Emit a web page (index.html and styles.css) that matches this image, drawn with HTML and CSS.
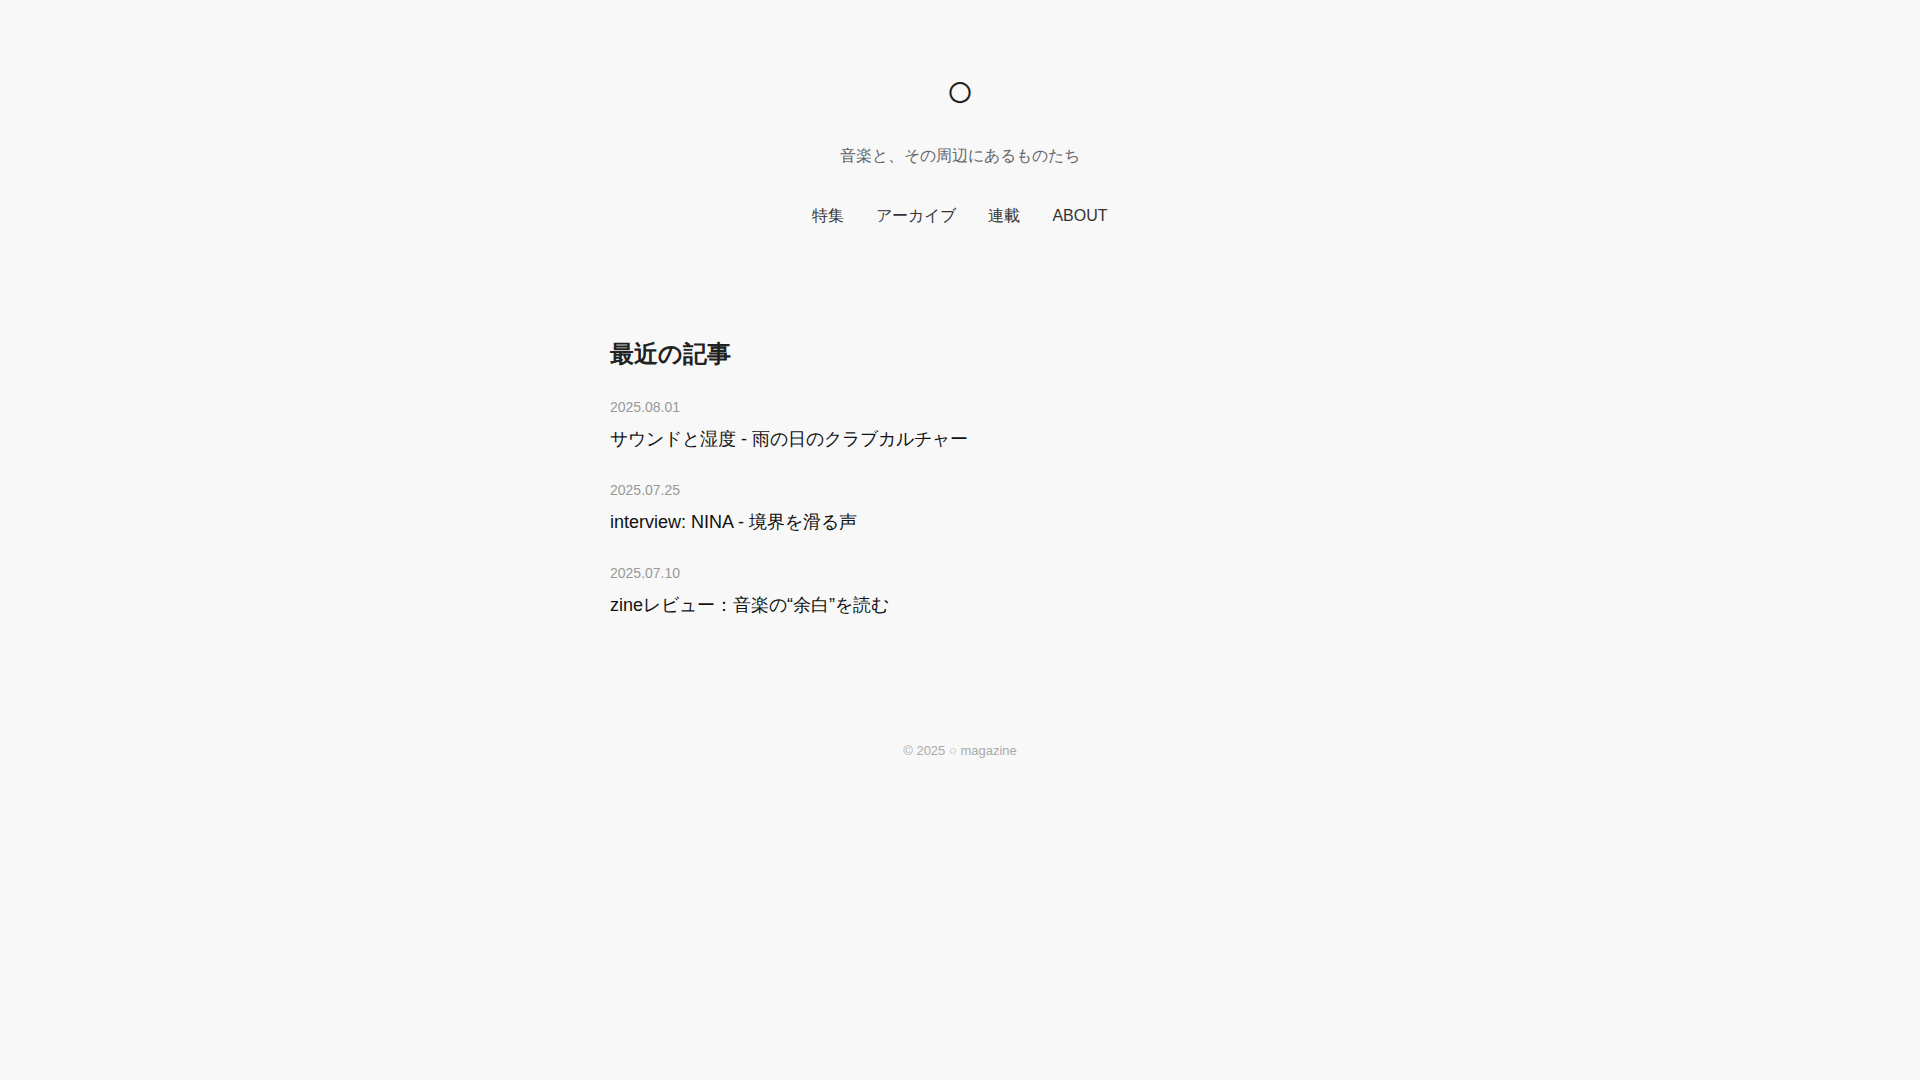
FILE: index.html
```html
<!DOCTYPE html>
<html lang="ja">
  <head>
    <meta charset="UTF-8" />
    <meta name="viewport" content="width=device-width, initial-scale=1.0" />
    <title>○ magazine</title>
    <link rel="stylesheet" href="styles.css">
  </head>
  <body>
    <header class="site-header">
      <h1 class="logo">○</h1>
      <p class="tagline">音楽と、その周辺にあるものたち</p>
      <nav class="site-nav">
        <a href="#">特集</a>
        <a href="#">アーカイブ</a>
        <a href="#">連載</a>
        <a href="#">ABOUT</a>
      </nav>
    </header>

    <main class="container">
      <h2 class="section-title">最近の記事</h2>

      <article class="post">
        <p class="post-date">2025.08.01</p>
        <h3 class="post-title"><a href="#">サウンドと湿度 - 雨の日のクラブカルチャー</a></h3>
      </article>

      <article class="post">
        <p class="post-date">2025.07.25</p>
        <h3 class="post-title"><a href="#">interview: NINA - 境界を滑る声</a></h3>
      </article>

      <article class="post">
        <p class="post-date">2025.07.10</p>
        <h3 class="post-title"><a href="#">zineレビュー：音楽の“余白”を読む</a></h3>
      </article>
    </main>

    <footer class="site-footer">
      <p>© 2025 ○ magazine</p>
    </footer>
  </body>
</html>
```

FILE: styles.css
```css
* {
  margin: 0;
  padding: 0;
  box-sizing: border-box;
}
body {
  font-family: "Liberation Sans", sans-serif;
  background-color: #f8f8f8;
  color: #222;
  line-height: 28px;
}
a {
  color: inherit;
  text-decoration: none;
}
.site-header {
  padding: 64px 16px 48px;
  text-align: center;
}
.logo {
  font-size: 48px;
  line-height: 54px;
  font-weight: normal;
}
.tagline {
  margin-top: 24px;
  color: #666;
}
.site-nav {
  display: flex;
  justify-content: center;
  gap: 32px;
  margin-top: 32px;
  color: #333;
}
.container {
  max-width: 700px;
  margin: 0 auto;
  padding: 64px 0;
}
.section-title {
  margin-bottom: 28px;
  font-size: 24px;
  line-height: 24px;
}
.post {
  margin-bottom: 24px;
}
.post-date {
  margin-bottom: 4px;
  color: #999;
  font-size: 14px;
  line-height: 27px;
}
.post-title {
  color: #111;
  font-size: 18px;
  font-weight: normal;
}
.site-footer {
  padding: 32px;
  color: #aaa;
  font-size: 13px;
  line-height: 24px;
  text-align: center;
}
```
